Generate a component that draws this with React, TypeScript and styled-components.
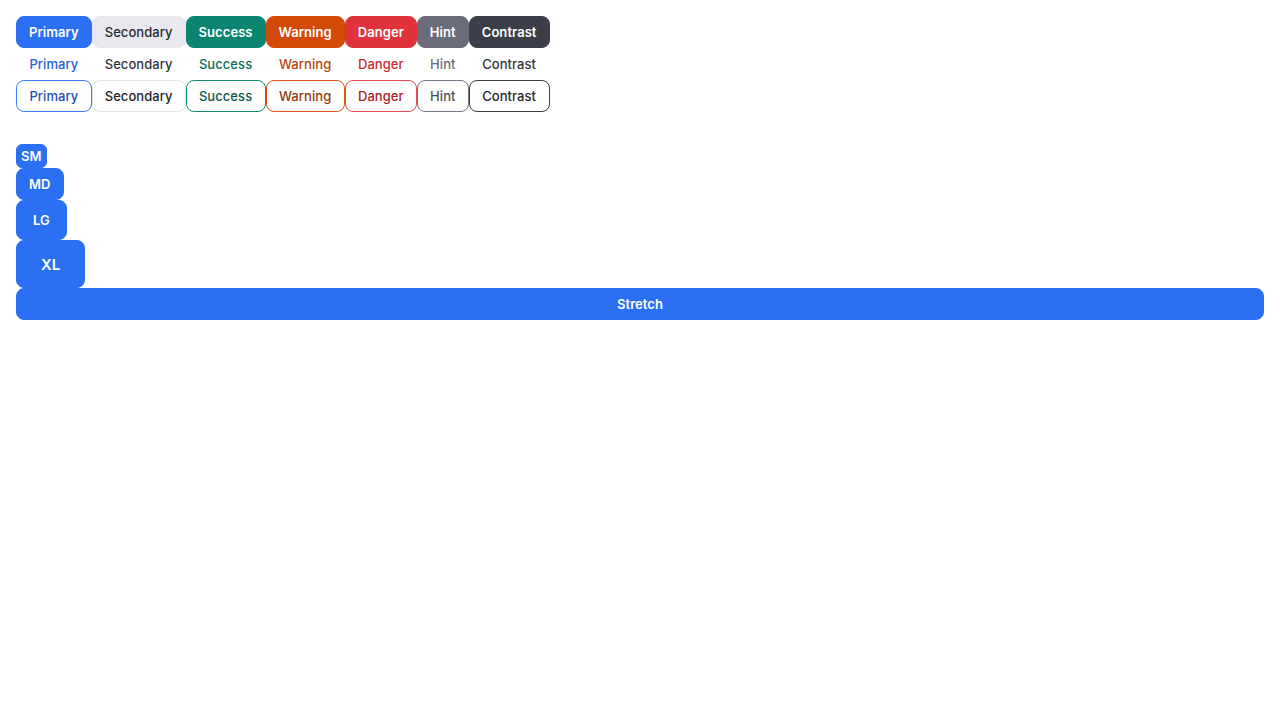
import React from "react";
import styled, { createGlobalStyle, css } from "styled-components";

const Global = createGlobalStyle`
  html, body { margin: 0; padding: 0; background: #ffffff; }
  body { font-family: Inter, "Noto Sans", sans-serif; -webkit-font-smoothing: antialiased; }
`;

type Tone = "primary" | "secondary" | "success" | "warning" | "danger" | "hint" | "contrast";
type Variant = "solid" | "ghost" | "outline";
type Size = "sm" | "md" | "lg" | "xl";

const palette: Record<Tone, { bg: string; fg: string; ghost: string; border: string; outlineText: string }> = {
  primary: { bg: "#2b6ff2", fg: "#ffffff", ghost: "#2560d6", border: "#3b7cf4", outlineText: "#1f4fb5" },
  secondary: { bg: "#e8e8ee", fg: "#2b2b33", ghost: "#34343c", border: "#e4e4ea", outlineText: "#26262e" },
  success: { bg: "#0c8570", fg: "#ffffff", ghost: "#0d6f5c", border: "#168a74", outlineText: "#0a5a4a" },
  warning: { bg: "#d24a07", fg: "#ffffff", ghost: "#b8440c", border: "#d9551a", outlineText: "#963710" },
  danger: { bg: "#e0333b", fg: "#ffffff", ghost: "#c72a31", border: "#e04a50", outlineText: "#a6222a" },
  hint: { bg: "#6b6c7b", fg: "#ffffff", ghost: "#6b6c7b", border: "#767786", outlineText: "#4c4d5a" },
  contrast: { bg: "#3c3f4a", fg: "#ffffff", ghost: "#33353d", border: "#3c3f4a", outlineText: "#25272e" },
};

const sizes: Record<Size, { h: number; px: number; fs: number; r: number }> = {
  sm: { h: 24, px: 4, fs: 13, r: 6 },
  md: { h: 32, px: 12, fs: 13, r: 8 },
  lg: { h: 40, px: 16, fs: 13, r: 8 },
  xl: { h: 48, px: 24, fs: 15, r: 8 },
};

const Button = styled.button<{ $tone: Tone; $variant: Variant; $size: Size; $stretch?: boolean }>`
  display: inline-flex;
  align-items: center;
  justify-content: center;
  box-sizing: border-box;
  font-family: Inter, "Noto Sans", sans-serif;
  cursor: pointer;
  margin: 0;
  white-space: nowrap;
  line-height: 1;
  letter-spacing: 0.06px;
  ${({ $size }) => css`
    height: ${sizes[$size].h}px;
    padding: 0 ${sizes[$size].px}px;
    font-size: ${sizes[$size].fs}px;
    border-radius: ${sizes[$size].r}px;
  `}
  ${({ $stretch }) => $stretch && css`width: 100%;`}
  ${({ $tone, $variant }) => {
    const p = palette[$tone];
    if ($variant === "solid")
      return css`
        background: ${p.bg};
        color: ${p.fg};
        border: 1px solid ${p.bg};
        font-weight: ${$tone === "secondary" ? 500 : 600};
      `;
    if ($variant === "ghost")
      return css`
        background: transparent;
        color: ${p.ghost};
        border: 1px solid transparent;
        font-weight: 500;
      `;
    return css`
      background: #ffffff;
      color: ${p.outlineText};
      border: 1px solid ${p.border};
      font-weight: 500;
    `;
  }}
`;

const Page = styled.main`
  padding: 16px;
  display: flex;
  flex-direction: column;
  gap: 32px;
`;

const Group = styled.section`
  display: flex;
  flex-direction: column;
  align-items: flex-start;
`;

const Grid = styled.div`
  display: grid;
  grid-template-columns: repeat(7, auto);
  justify-items: stretch;
`;

const tones: { tone: Tone; label: string }[] = [
  { tone: "primary", label: "Primary" },
  { tone: "secondary", label: "Secondary" },
  { tone: "success", label: "Success" },
  { tone: "warning", label: "Warning" },
  { tone: "danger", label: "Danger" },
  { tone: "hint", label: "Hint" },
  { tone: "contrast", label: "Contrast" },
];

const variants: Variant[] = ["solid", "ghost", "outline"];
const sizeList: { size: Size; label: string }[] = [
  { size: "sm", label: "SM" },
  { size: "md", label: "MD" },
  { size: "lg", label: "LG" },
  { size: "xl", label: "XL" },
];

export default function App() {
  return (
    <>
      <Global />
      <Page>
        <Group>
          <Grid>
            {variants.map((v) =>
              tones.map((t) => (
                <Button key={v + t.tone} $tone={t.tone} $variant={v} $size="md">
                  {t.label}
                </Button>
              ))
            )}
          </Grid>
        </Group>
        <Group>
          {sizeList.map((s) => (
            <Button key={s.size} $tone="primary" $variant="solid" $size={s.size}>
              {s.label}
            </Button>
          ))}
          <Button $tone="primary" $variant="solid" $size="md" $stretch>
            Stretch
          </Button>
        </Group>
      </Page>
    </>
  );
}
